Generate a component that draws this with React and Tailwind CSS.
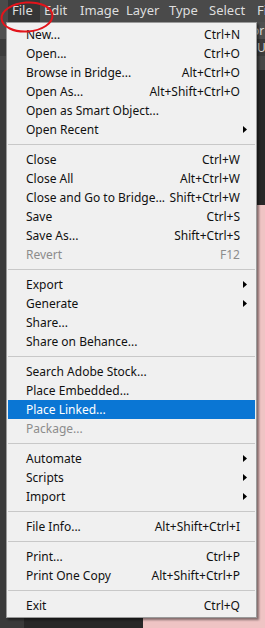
import React from 'react'

const menuBar = [
  { label: 'File', w: 'w-[32px]', active: true },
  { label: 'Edit', w: 'w-[36px]' },
  { label: 'Image', w: 'w-[46px]' },
  { label: 'Layer', w: 'w-[43px]' },
  { label: 'Type', w: 'w-[40px]' },
  { label: 'Select', w: 'w-[48px]' },
  { label: 'Fi', w: 'w-[12px]' },
]

// null = separator
const items = [
  { label: 'New...', key: 'Ctrl+N' },
  { label: 'Open...', key: 'Ctrl+O' },
  { label: 'Browse in Bridge...', key: 'Alt+Ctrl+O' },
  { label: 'Open As...', key: 'Alt+Shift+Ctrl+O' },
  { label: 'Open as Smart Object...' },
  { label: 'Open Recent', sub: true },
  null,
  { label: 'Close', key: 'Ctrl+W' },
  { label: 'Close All', key: 'Alt+Ctrl+W' },
  { label: 'Close and Go to Bridge...', key: 'Shift+Ctrl+W' },
  { label: 'Save', key: 'Ctrl+S' },
  { label: 'Save As...', key: 'Shift+Ctrl+S' },
  { label: 'Revert', key: 'F12', disabled: true },
  null,
  { label: 'Export', sub: true },
  { label: 'Generate', sub: true },
  { label: 'Share...' },
  { label: 'Share on Behance...' },
  null,
  { label: 'Search Adobe Stock...' },
  { label: 'Place Embedded...' },
  { label: 'Place Linked...', active: true },
  { label: 'Package...', disabled: true },
  null,
  { label: 'Automate', sub: true },
  { label: 'Scripts', sub: true },
  { label: 'Import', sub: true },
  null,
  { label: 'File Info...', key: 'Alt+Shift+Ctrl+I' },
  null,
  { label: 'Print...', key: 'Ctrl+P' },
  { label: 'Print One Copy', key: 'Alt+Shift+Ctrl+P' },
  null,
  { label: 'Exit', key: 'Ctrl+Q' },
]

function Arrow({ color }) {
  return (
    <svg width="4" height="7" viewBox="0 0 4 7">
      <path d="M0 0 L4 3.5 L0 7 Z" fill={color} />
    </svg>
  )
}

function MenuItem({ item }) {
  const text = item.active
    ? 'text-white'
    : item.disabled
    ? 'text-[#8c8c8c]'
    : 'text-[#111]'
  return (
    <div className={`h-[19px] flex items-center ${item.active ? 'bg-[#0a76d4]' : ''} ${text}`}>
      <span className="pl-[18px] flex-1 whitespace-nowrap">{item.label}</span>
      {item.key && <span className="whitespace-nowrap pr-[15px]">{item.key}</span>}
      {item.sub && (
        <span className="w-[12px] flex items-center">
          <Arrow color={item.active ? '#fff' : '#000'} />
        </span>
      )}
    </div>
  )
}

export default function App() {
  return (
    <div
      className="relative w-[265px] h-[628px] overflow-hidden bg-[#282828] flex flex-col"
      style={{ fontFamily: '"Noto Sans", "Open Sans", sans-serif' }}
    >
      {/* menu bar */}
      <div className="h-[22px] bg-[#4a4a4a] flex items-stretch pl-[8px] text-[13px] text-[#dedede] shrink-0">
        {menuBar.map((m) => (
          <div
            key={m.label}
            className={`${m.w} shrink-0 flex items-center pl-[4px] ${m.active ? 'bg-[#363636]' : ''}`}
          >
            {m.label}
          </div>
        ))}
      </div>

      {/* options bar + tabs behind the menu */}
      <div className="h-[18px] bg-[#4f4f4f] border-b border-[#3a3a3a] text-[12px] text-[#ddd] flex items-center pl-[252px] shrink-0">
        or
      </div>
      <div className="h-[16px] bg-[#3c3c3c] text-[12px] text-[#ddd] flex items-center pl-[257px] shrink-0">
        U
      </div>
      <div className="h-[14px] bg-[#474747] shrink-0" />

      {/* workspace */}
      <div className="flex-1 flex">
        <div className="w-[24px] bg-[#3a3a3a] shrink-0" />
        <div className="flex-1 bg-[#282828] pl-[119px] pt-[135px] flex">
          <div className="flex-1 bg-[#efc4c4]" />
        </div>
      </div>

      {/* dropdown */}
      <div className="absolute left-[6px] top-[22px] w-[251px] bg-[#f0f0f0] border border-[#9a9a9a] shadow-[2px_2px_2px_rgba(0,0,0,0.45)] pt-[2px] pb-[2px] px-[1px] text-[12px] leading-none">
        {items.map((item, i) =>
          item ? (
            <MenuItem key={i} item={item} />
          ) : (
            <div key={i} className="h-[11px] flex items-center">
              <div className="h-px w-full bg-[#c8c8c8]" />
            </div>
          )
        )}
      </div>

      {/* red annotation circle */}
      <svg className="absolute left-0 top-0" width="60" height="36" viewBox="0 0 60 36">
        <ellipse cx="27" cy="17" rx="25.5" ry="14.5" fill="none" stroke="#e3141b" strokeWidth="2" transform="rotate(-4 27 17)" />
      </svg>
    </div>
  )
}
